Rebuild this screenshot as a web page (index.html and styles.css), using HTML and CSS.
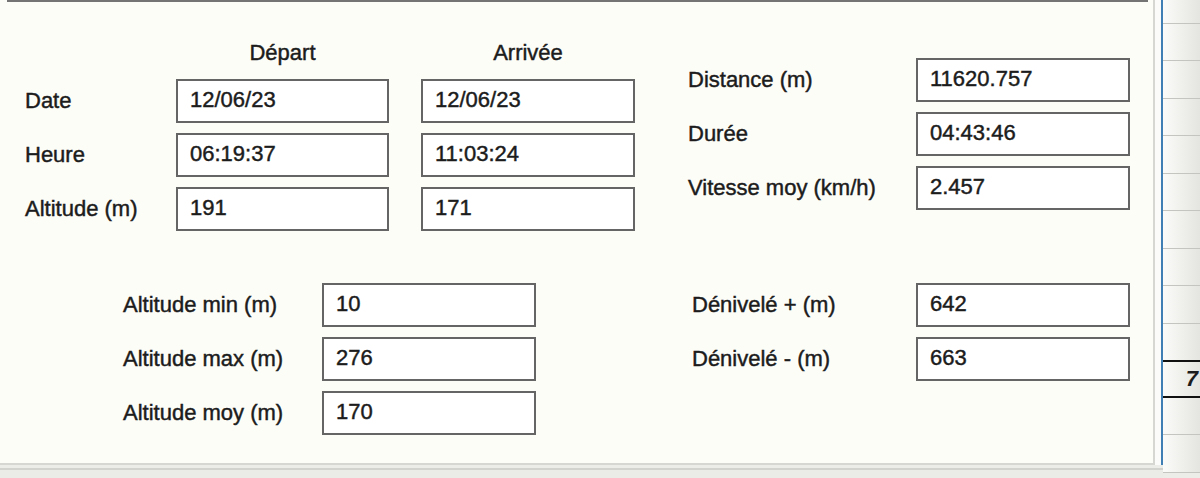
FILE: index.html
```html
<!DOCTYPE html>
<html lang="fr">
<head>
  <meta charset="UTF-8" />
  <title>Statistiques de la trace</title>
  <link rel="stylesheet" href="styles.css">
</head>
<body>

  <div class="window">
    <div class="panel">
      <div class="top-line"></div>

      <div class="row-top">
        <div class="trip">
          <div class="trip-head">
            <span></span>
            <span>Départ</span>
            <span>Arrivée</span>
          </div>
          <div class="trip-row">
            <span class="label">Date</span>
            <div class="field">12/06/23</div>
            <div class="field">12/06/23</div>
          </div>
          <div class="trip-row">
            <span class="label">Heure</span>
            <div class="field">06:19:37</div>
            <div class="field">11:03:24</div>
          </div>
          <div class="trip-row">
            <span class="label">Altitude (m)</span>
            <div class="field">191</div>
            <div class="field">171</div>
          </div>
        </div>

        <div class="totals">
          <span class="label">Distance (m)</span>
          <div class="field">11620.757</div>
          <span class="label">Durée</span>
          <div class="field">04:43:46</div>
          <span class="label">Vitesse moy (km/h)</span>
          <div class="field">2.457</div>
        </div>
      </div>

      <div class="row-bottom">
        <div class="alti">
          <span class="label">Altitude min (m)</span>
          <div class="field">10</div>
          <span class="label">Altitude max (m)</span>
          <div class="field">276</div>
          <span class="label">Altitude moy (m)</span>
          <div class="field">170</div>
        </div>

        <div class="deniv">
          <span class="label">Dénivelé + (m)</span>
          <div class="field">642</div>
          <span class="label">Dénivelé - (m)</span>
          <div class="field">663</div>
        </div>
      </div>
    </div>

    <div class="splitter"></div>

    <div class="list">
      <div class="cell first"></div>
      <div class="cell"></div>
      <div class="cell"></div>
      <div class="cell"></div>
      <div class="cell"></div>
      <div class="cell"></div>
      <div class="cell"></div>
      <div class="cell"></div>
      <div class="cell"></div>
      <div class="cell"></div>
      <div class="cell selected"><span>7</span></div>
      <div class="cell"></div>
      <div class="cell"></div>
    </div>
  </div>

  <div class="status"></div>

</body>
</html>
```

FILE: styles.css
```css
html, body {
  margin: 0;
  padding: 0;
  height: 100%;
  overflow: hidden;
  background: #ecece9;
  font-family: 'Liberation Sans', Arial, sans-serif;
  font-size: 22px;
  color: #1c1c1c;
}

.window {
  display: flex;
  height: 465px;
}

.panel {
  width: 1155px;
  flex: none;
  background: #fdfdf8;
  border-right: 2px solid #d6d6d2;
  border-bottom: 2px solid #d6d6d2;
  box-sizing: border-box;
  height: 465px;
  padding-left: 25px;
}

.top-line {
  height: 2px;
  background: #747474;
  margin-left: -18px;
  width: 1141px;
}

.label,
.field,
.trip-head span {
  -webkit-text-stroke: 0.45px #1c1c1c;
}

.label {
  white-space: nowrap;
}

.field {
  box-sizing: border-box;
  height: 44px;
  border: 2px solid #656565;
  background: #fff;
  padding: 0 12px;
  line-height: 38px;
}

.row-top {
  display: flex;
  align-items: flex-start;
}

.trip {
  margin-top: 38px;
  display: grid;
  grid-template-columns: 119px 213px 214px;
  column-gap: 32px;
  row-gap: 10px;
  align-items: center;
}

.trip-head,
.trip-row {
  display: contents;
}

.trip-head span {
  text-align: center;
  line-height: 26px;
  margin-bottom: 3px;
}

.totals {
  margin-top: 56px;
  margin-left: 53px;
  display: grid;
  grid-template-columns: 228px 214px;
  row-gap: 10px;
  align-items: center;
}

.row-bottom {
  display: flex;
  align-items: flex-start;
  margin-top: 52px;
}

.alti {
  margin-left: 98px;
  display: grid;
  grid-template-columns: 199px 214px;
  row-gap: 10px;
  align-items: center;
}

.deniv {
  margin-left: 156px;
  display: grid;
  grid-template-columns: 224px 214px;
  row-gap: 10px;
  align-items: center;
}

.splitter {
  width: 6px;
  flex: none;
  background: #fbfbf9;
  border-right: 2px solid #3f7fb4;
}

.list {
  flex: 1;
  height: 478px;
  display: flex;
  flex-direction: column;
  overflow: hidden;
}

.cell {
  flex: none;
  height: 37.5px;
  box-sizing: border-box;
  border-bottom: 1px solid #c4c4c0;
  background: linear-gradient(to right, #fbfbf9, #e4e4e0);
}

.cell.first {
  height: 23.5px;
}

.cell.selected {
  border-top: 2px solid #111;
  border-bottom: 2px solid #111;
  margin-top: -1px;
  text-align: right;
  font-weight: bold;
  font-style: italic;
  line-height: 34px;
  padding-right: 2px;
}

.status {
  height: 13px;
  margin-right: 37px;
  border-top: 2px solid #d2d2ce;
  margin-top: 3px;
  background: #ebebe8;
}
```
